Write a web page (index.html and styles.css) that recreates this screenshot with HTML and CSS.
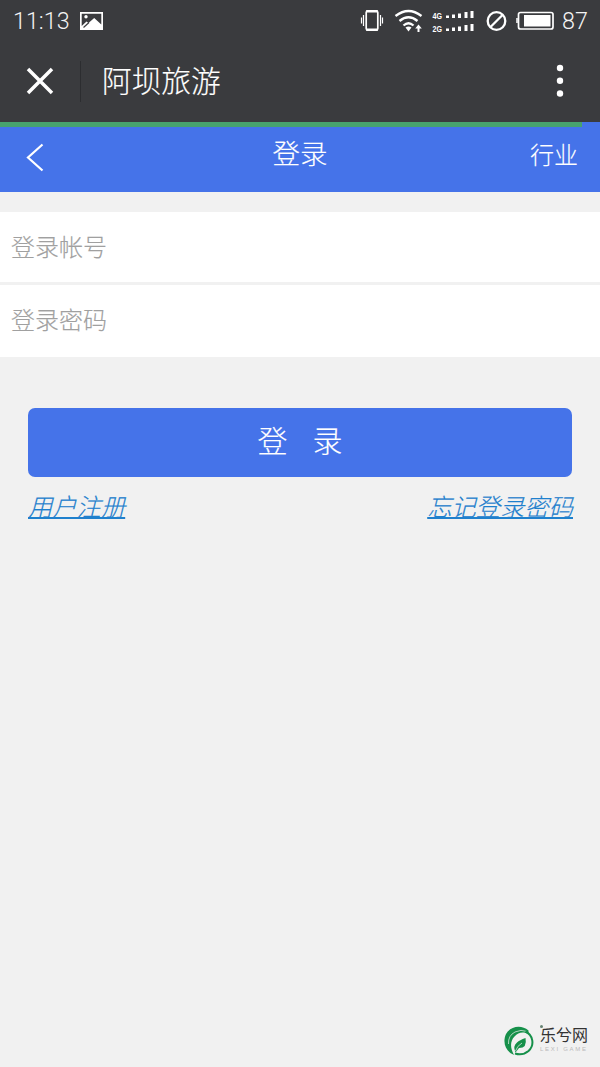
FILE: index.html
```html
<!DOCTYPE html>
<html lang="zh-CN">
<head>
<meta charset="utf-8">
<title>阿坝旅游</title>
<link rel="stylesheet" href="styles.css">
</head>
<body>
<div class="status">
  <span class="clock">11:13</span>
  <svg class="picture" width="23" height="18" viewBox="0 0 23 18"><path fill="#fff" fill-rule="evenodd" d="M0 0H23V18H0ZM1.700 1.700V14L6.500 9.500L8.500 11L14.200 6L21.300 12.500V1.700Z"/><circle cx="6" cy="4.800" r="1.700" fill="#fff"/><path d="M3.500 15.500L9 10.500" stroke="#3a3b3e" stroke-width="1.200"/></svg>
  <svg class="signals" width="205" height="34" viewBox="0 0 205 34" fill="none" stroke="#fff">
    <rect x="6.200" y="11" width="11.600" height="19" rx="1.500" stroke-width="1.700"/>
    <path d="M6.200 11.300H17.800M6.200 29.700H17.800" stroke-width="2.400"/>
    <path d="M3.500 15V26M20.500 15V26M1.500 17.500V23.500M22.500 17.500V23.500" stroke-width="1.200"/>
    <path d="M35.500 16Q48.500 6 61.500 16M39.500 21Q48.500 13.500 57.500 21M43.500 25.500Q48.500 21 53.500 25.500" stroke-width="2.300"/>
    <path d="M45.500 27.500Q48.500 25.500 51.500 27.500L48.500 31.500Z" fill="#fff" stroke="none"/>
    <path d="M58.500 32V27" stroke-width="2"/><path d="M55.200 28.500L58.500 24.500L61.800 28.500Z" fill="#fff" stroke="none"/>
    <g fill="#fff" stroke="none">
      <text x="72.500" y="18.500" class="network" textLength="9.500" lengthAdjust="spacingAndGlyphs">4G</text>
      <text x="72.500" y="31.700" class="network" textLength="9.500" lengthAdjust="spacingAndGlyphs">2G</text>
      <path d="M86 15.500h3v2.500h-3zM92 14.500h3v3.500h-3zM98 13.500h3v4.500h-3zM104.500 12h3v6h-3zM110.500 11h3v7h-3zM86 28.500h3v2.500h-3zM92 27.500h3v3.500h-3zM98 26.500h3v4.500h-3zM104.500 25h3v6h-3zM110.500 24h3v7h-3z"/>
    </g>
    <circle cx="136.500" cy="21" r="8.800" stroke-width="2.300"/><path d="M130.500 27L142.500 15" stroke-width="2.300"/>
    <rect x="158.500" y="12.500" width="34.500" height="16.500" rx="2" stroke-width="1.700"/>
    <rect x="164" y="15" width="26.500" height="11.500" fill="#fff" stroke="none"/><path d="M157 18V23" stroke-width="1.500"/>
  </svg>
  <span class="percent">87</span>
</div>
<div class="titlebar">
  <svg class="close" width="28" height="28" viewBox="0 0 28 28"><path d="M2 2L26 26M26 2L2 26" stroke="#fff" stroke-width="3.500"/></svg>
  <span class="divider"></span>
  <h1 class="site">阿坝旅游</h1>
  <svg class="more" width="8" height="34" viewBox="0 0 8 34" fill="#fff"><circle cx="4" cy="4" r="3.200"/><circle cx="4" cy="16.700" r="3.200"/><circle cx="4" cy="29.500" r="3.200"/></svg>
</div>
<main class="page">
  <div class="progress"></div>
  <header class="header">
    <svg class="back" width="18" height="29" viewBox="0 0 18 29"><path d="M16.500 1.500L2 14.500L16.500 27.500" fill="none" stroke="#fff" stroke-width="2.200"/></svg>
    <h2 class="heading">登录</h2>
    <span class="industry">行业</span>
  </header>
  <form class="form">
    <input class="field" type="text" placeholder="登录帐号">
    <input class="field field-password" type="password" placeholder="登录密码">
    <button class="submit" type="button"><span>登</span><span>录</span></button>
  </form>
  <nav class="links"><a class="link" href="#">用户注册</a><a class="link" href="#">忘记登录密码</a></nav>
  <footer class="brand">
    <svg class="leaf" width="30" height="30" viewBox="0 0 30 30">
      <path fill="#16904a" d="M24.500 4.500C17 -2 6 .5 2 8C-2 17 2 26 10 29C6 22 6 15 10.500 10.500C14.500 6 20 5.500 24.500 8.500Z"/>
      <path d="M4.500 18Q4 9.500 11 6Q17 3 23 5.500" fill="none" stroke="#f1f1f1" stroke-width=".7"/>
      <path d="M21.500 5.500C29 9 31 19 24.500 25Q18.500 30 11 27.500" fill="none" stroke="#16904a" stroke-width="2"/>
      <path fill="#16904a" d="M21.500 12Q23.500 22 15 22L11.500 26.500Q8.500 20 13 16.500Q15.500 14 21.500 12Z"/>
      <path d="M11.500 25Q13 20 18 17" stroke="#f1f1f1" fill="none" stroke-width=".7"/>
    </svg>
    <div class="wordmark"><i class="brand-dot"></i><span class="brand-name">乐兮网</span><span class="brand-sub">LEXI GAME</span></div>
  </footer>
</main>
</body>
</html>
```
FILE: styles.css
```css
* { box-sizing: border-box; }
body {
  margin: 0;
  min-height: 1067px;
  display: flex;
  flex-direction: column;
  background: #f1f1f1;
  font-family: "Noto Sans CJK SC", sans-serif;
  font-weight: 300;
}
h1, h2 { margin: 0; font-weight: 300; }
.site, .heading, .industry, .field, .submit, .link { -webkit-text-stroke: 0.15px currentColor; }
.status {
  height: 43px;
  display: flex;
  align-items: flex-start;
  padding-left: 13px;
  background: #3a3b3e;
  color: #f4f4f4;
  font: 300 23.3px/43px Roboto, sans-serif;
}
.clock { width: 67px; white-space: nowrap; }
.picture { margin-top: 12px; }
.signals { margin-left: 257px; }
.network { font: bold 8.5px "Liberation Sans", sans-serif; }
.percent { margin-left: -3px; }
.titlebar {
  height: 79px;
  display: flex;
  align-items: center;
  padding: 0 36px 3px 26px;
  background: #3a3b3e;
  color: #fff;
}
.divider { width: 1px; height: 41px; margin: 0 21px 0 26px; background: #2c2d30; }
.site { font-size: 29.7px; line-height: 44px; padding-bottom: 2px; }
.more { margin-left: auto; }
.page { flex: 1; display: flex; flex-direction: column; }
.progress { height: 5px; background: linear-gradient(90deg, #47a36e 582px, #4573e9 582px); }
.header {
  height: 65px;
  display: grid;
  grid-template-columns: 1fr auto 1fr;
  padding: 0 22px 0 22px;
  background: #4573e9;
  color: #fff;
}
.back { margin: 16px 0 0 4px; }
.heading { font-size: 27.5px; line-height: 50px; }
.industry { justify-self: end; font-size: 24px; line-height: 53px; }
.form { display: flex; flex-direction: column; padding-top: 20px; }
.field {
  width: 100%;
  height: 70px;
  border: 0;
  padding: 0 10px 4px 11px;
  background: #fff;
  font: 300 24px "Noto Sans CJK SC", sans-serif;
}
.field-password { height: 72px; margin-top: 3px; padding-bottom: 5px; }
.field::placeholder { color: #a0a0a0; opacity: 1; }
.submit {
  height: 69px;
  margin: 51px 28px 0;
  padding: 0 0 7px;
  display: flex;
  justify-content: center;
  align-items: center;
  gap: 25px;
  border: 0;
  border-radius: 7px;
  background: #4573e9;
  color: #fff;
  font: 300 30px "Noto Sans CJK SC", sans-serif;
}
.links { display: flex; justify-content: space-between; padding: 11px 27px 0 28px; }
.link { color: #1f80cd; font-size: 24.3px; line-height: 36px; font-style: italic; text-decoration-thickness: 1.5px; }
.brand { display: flex; align-items: flex-start; margin: auto 12px 11px auto; }
.wordmark { position: relative; display: flex; flex-direction: column; margin: -2px 0 0 6px; }
.brand-dot { position: absolute; left: 0; top: 1px; width: 3px; height: 3px; border-radius: 50%; background: #668272; }
.brand-name { font-size: 16px; font-weight: 400; line-height: 20px; color: #333; }
.brand-sub { margin-top: 1px; font: 6px/9px "Liberation Sans", sans-serif; letter-spacing: 1.7px; color: #bbb; }
```
